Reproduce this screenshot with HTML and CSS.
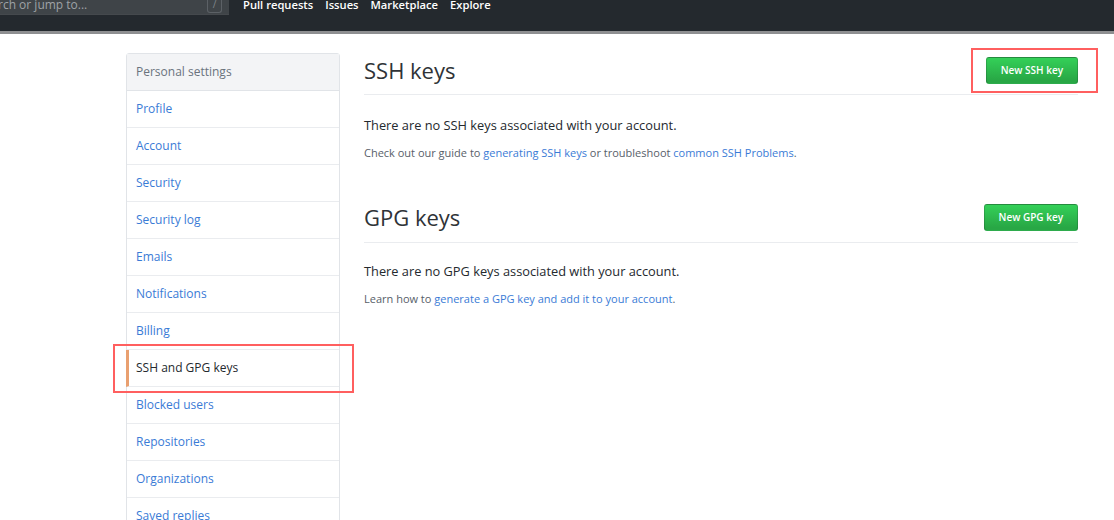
FILE: index.html
```html
<!DOCTYPE html>
<html lang="en">
<head>
<meta charset="utf-8">
<title>SSH and GPG keys</title>
<link rel="stylesheet" href="styles.css">
</head>
<body>
<header class="topbar">
  <div class="search">
    <span class="search-text">Search or jump to...</span>
    <span class="slash">/</span>
  </div>
  <nav class="topnav">
    <a href="#">Pull requests</a>
    <a href="#">Issues</a>
    <a href="#">Marketplace</a>
    <a href="#">Explore</a>
  </nav>
</header>
<div class="page">
  <aside class="sidebar">
    <div class="sidebar-head">Personal settings</div>
    <a class="item" href="#">Profile</a>
    <a class="item" href="#">Account</a>
    <a class="item" href="#">Security</a>
    <a class="item" href="#">Security log</a>
    <a class="item" href="#">Emails</a>
    <a class="item" href="#">Notifications</a>
    <a class="item" href="#">Billing</a>
    <a class="item selected highlight" href="#">SSH and GPG keys</a>
    <a class="item" href="#">Blocked users</a>
    <a class="item" href="#">Repositories</a>
    <a class="item" href="#">Organizations</a>
    <a class="item" href="#">Saved replies</a>
  </aside>
  <main class="main">
    <section class="section">
      <div class="section-head">
        <h2>SSH keys</h2>
        <a class="btn highlight-btn" href="#">New SSH key</a>
      </div>
      <p class="lead">There are no SSH keys associated with your account.</p>
      <p class="note">Check out our guide to <a href="#">generating SSH keys</a> or troubleshoot <a href="#">common SSH Problems</a>.</p>
    </section>
    <section class="section gpg">
      <div class="section-head">
        <h2>GPG keys</h2>
        <a class="btn" href="#">New GPG key</a>
      </div>
      <p class="lead">There are no GPG keys associated with your account.</p>
      <p class="note">Learn how to <a href="#">generate a GPG key and add it to your account</a>.</p>
    </section>
  </main>
</div>
</body>
</html>
```
FILE: styles.css
```css
* { box-sizing: border-box; }
body {
  margin: 0;
  font-family: "Open Sans", "Liberation Sans", sans-serif;
  color: #24292e;
  background: #fff;
}
a { text-decoration: none; }

.topbar {
  height: 34px;
  background: #24292e;
  border-bottom: 3px solid #8e8f91;
  display: flex;
  align-items: flex-start;
}
.search {
  width: 259px;
  height: 15px;
  margin-left: -30px;
  background: #3f4448;
  border-bottom: 1px solid #45494d;
  display: flex;
  align-items: center;
  justify-content: space-between;
  padding: 0 7px 0 8px;
}
.search-text {
  font-size: 12px;
  line-height: 16px;
  color: #9ea2a6;
  margin-top: -4px;
}
.slash {
  width: 15px;
  height: 13px;
  margin-top: -2px;
  border: 1px solid #5c6166;
  border-top: none;
  border-radius: 0 0 3px 3px;
  font-size: 10px;
  color: #80868b;
  line-height: 8px;
  text-align: center;
}
.topnav {
  display: flex;
  gap: 12px;
  margin-left: 14px;
  margin-top: -3px;
}
.topnav a {
  color: #fff;
  font-weight: 600;
  font-size: 11.2px;
  line-height: 16px;
}

.page {
  display: flex;
  align-items: flex-start;
  gap: 24px;
  padding: 19px 0 0 126px;
}
.sidebar {
  width: 214px;
  flex: none;
  border: 1px solid #e1e4e8;
  border-radius: 3px;
  display: flex;
  flex-direction: column;
}
.sidebar-head {
  height: 37px;
  background: #f3f4f6;
  border-bottom: 1px solid #e1e4e8;
  padding: 0 9px;
  font-size: 12px;
  line-height: 36px;
  color: #6a737d;
}
.item {
  position: relative;
  height: 37px;
  padding: 0 9px;
  border-bottom: 1px solid #eaecef;
  font-size: 12px;
  line-height: 36px;
  color: #3a7bd6;
}
.item.selected {
  color: #24292e;
  border-left: 3px solid #e9a070;
  margin-left: -1px;
  padding-left: 7px;
}
.highlight::after {
  content: "";
  position: absolute;
  left: -16px;
  right: -15px;
  top: -6px;
  bottom: -7px;
  border: 2px solid #ff5f5f;
  pointer-events: none;
}

.main {
  width: 714px;
  padding-top: 4px;
}
.section-head {
  display: flex;
  align-items: center;
  justify-content: space-between;
  padding-bottom: 10px;
  border-bottom: 1px solid #eaecef;
}
.section-head h2 {
  margin: 0;
  font-size: 22px;
  font-weight: 400;
  line-height: 27px;
  color: #2f3337;
}
.btn {
  position: relative;
  display: inline-block;
  height: 27px;
  padding: 0 14px;
  font-size: 10px;
  font-weight: 600;
  line-height: 25px;
  color: #fff;
  background: linear-gradient(#34d058, #28a745 90%);
  border: 1px solid rgba(27,31,35,0.2);
  border-radius: 3px;
}
.highlight-btn::after {
  content: "";
  position: absolute;
  left: -16px;
  right: -21px;
  top: -10px;
  bottom: -10px;
  border: 2px solid #ff5f5f;
}
.lead {
  margin: 21px 0 0;
  font-size: 12.8px;
  line-height: 18px;
  color: #24292e;
}
.note {
  margin: 10px 0 0;
  font-size: 11px;
  line-height: 18px;
  color: #586069;
}
.note a { color: #3a7bd6; }
.gpg { margin-top: 42px; }
.gpg .section-head { padding-bottom: 11px; }
.gpg .lead { margin-top: 19px; }
```
